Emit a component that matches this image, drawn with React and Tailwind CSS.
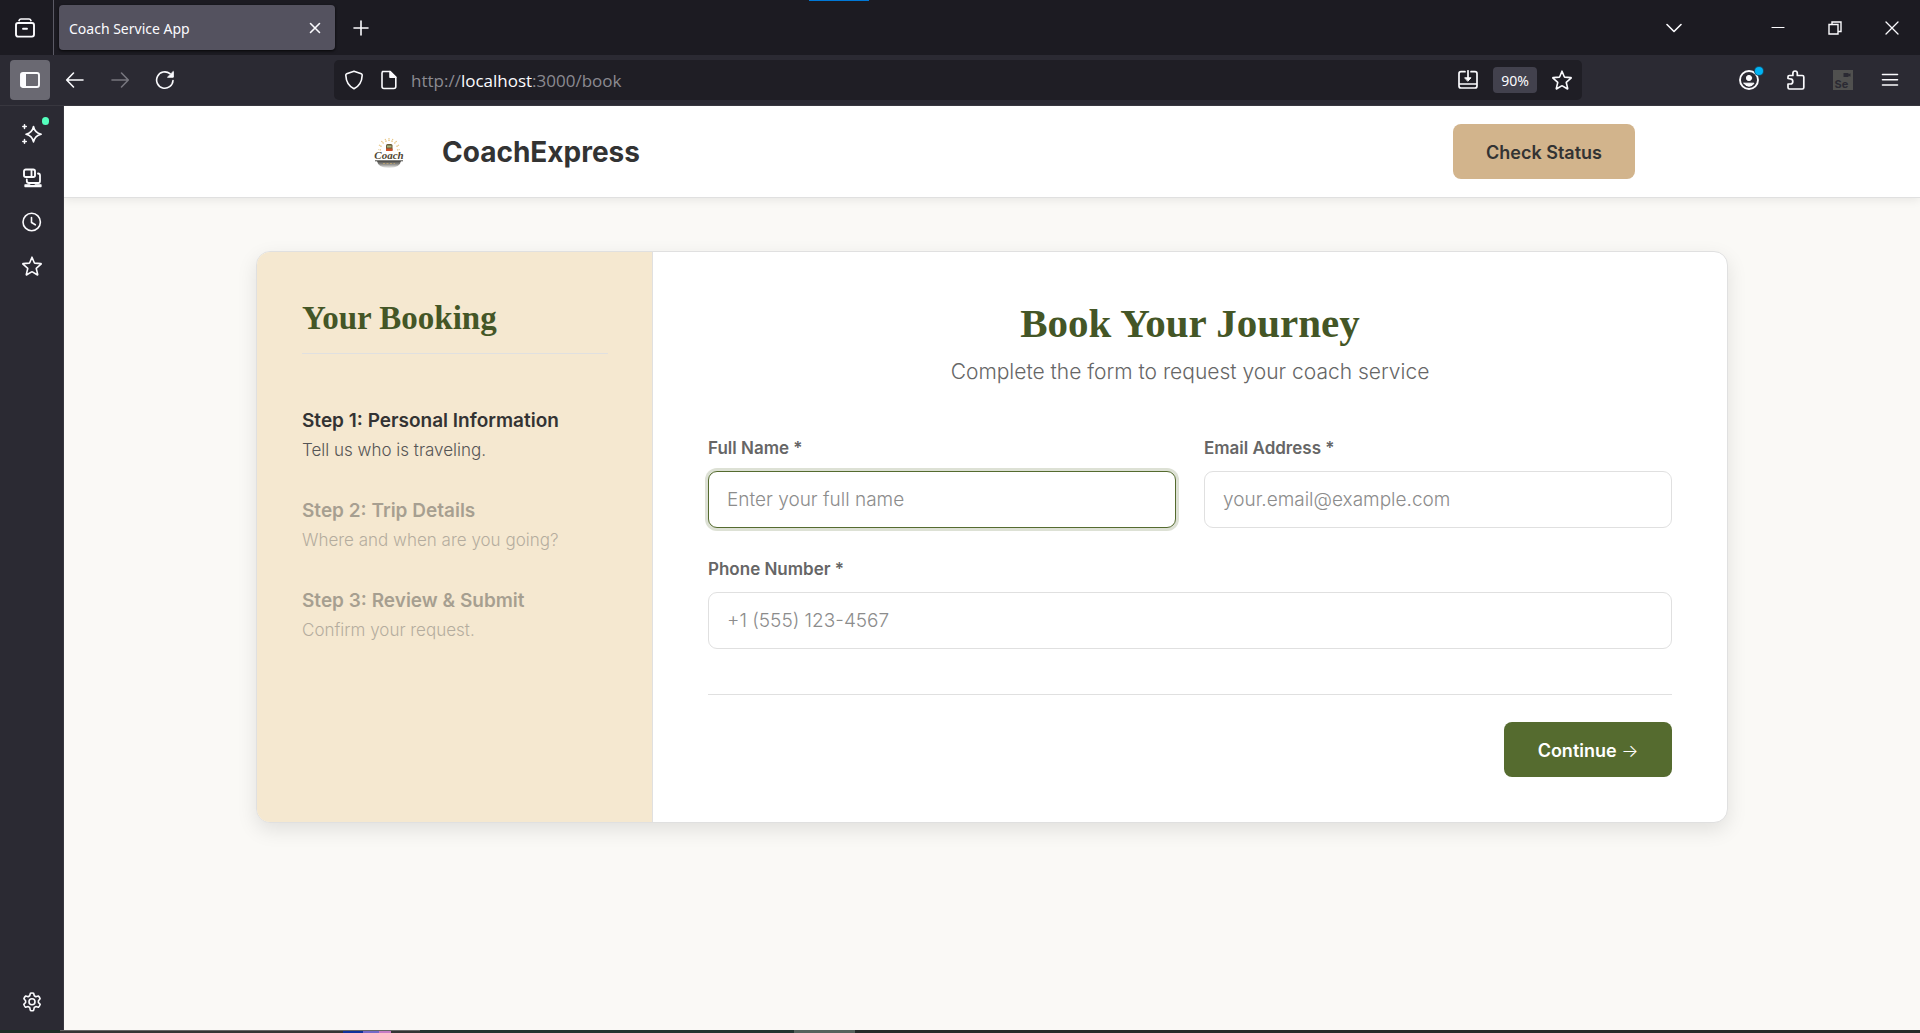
import React from "react";

const UI_FONT = "font-['Noto_Sans','Open_Sans',sans-serif]";
const BODY_FONT = "font-['Inter',sans-serif]";
const TITLE_FONT = "font-['Liberation_Serif',serif]";

function Icon({ size = 20, className = "", children }) {
  return (
    <svg
      width={size}
      height={size}
      viewBox={`0 0 ${size} ${size}`}
      fill="none"
      stroke="currentColor"
      strokeWidth="1.6"
      strokeLinecap="round"
      strokeLinejoin="round"
      className={`shrink-0 ${className}`}
      aria-hidden="true"
    >
      {children}
    </svg>
  );
}

const StarIcon = () => (
  <Icon>
    <path d="M10 1.2l2.3 5.5q.2.4.6.4l5.9.5q.6.2.2.6l-4.5 3.9q-.3.3-.2.7l1.4 5.6q0 .7-.6.4l-4.7-2.9q-.4-.2-.8 0l-4.8 2.9q-.6.3-.5-.4l1.4-5.6q.1-.4-.2-.7L1 8.2q-.4-.4.2-.6l5.9-.5q.4 0 .6-.4z" />
  </Icon>
);

function IconButton({ label, className = "", children }) {
  return (
    <button
      type="button"
      aria-label={label}
      className={`flex size-10 shrink-0 items-center justify-center rounded ${className}`}
    >
      {children}
    </button>
  );
}

function TabBar() {
  return (
    <div className="relative flex h-[55px] shrink-0 items-center bg-[#1c1b22]">
      <div className="absolute left-[809px] top-0 h-px w-[60px] bg-[#0078d7]" />
      <div className="flex h-full w-[54px] shrink-0 items-center border-r border-[#5b5a65] pl-[5px]">
        <IconButton label="Recent browsing">
          <Icon>
            <path d="M4 2.6Q4.6 1 6 1h8q1.400 0 2 1.600" />
            <rect x="1" y="5" width="18" height="13.600" rx="2" strokeWidth="1.900" />
            <path d="M8 10.800h4" strokeWidth="1.900" />
          </Icon>
        </IconButton>
      </div>
      <div className="ml-[5px] flex h-[45px] w-[276px] shrink-0 items-center justify-between rounded bg-[#54525f] pl-[10px] shadow-[0_1px_3px_rgba(0,0,0,0.8)]">
        <span className="pt-0.5 text-sm">Coach Service App</span>
        <button type="button" aria-label="Close tab" className="flex size-10 items-center justify-center">
          <Icon size={12}>
            <path d="M1.500 1.500l9 9M10.500 1.500l-9 9" />
          </Icon>
        </button>
      </div>
      <IconButton label="New tab" className="ml-[6px]">
        <Icon size={16}>
          <path d="M8 1v14M1 8h14" />
        </Icon>
      </IconButton>
      <div className="ml-auto flex items-center">
        <IconButton label="List all tabs" className="mr-16">
          <Icon size={16}>
            <path d="M1 4.500l7 7 7-7" />
          </Icon>
        </IconButton>
        <div className="flex items-center gap-[17px] pr-[8px]">
          <IconButton label="Minimize">
            <Icon size={14}>
              <path d="M1 6.500h12" strokeWidth="1.200" />
            </Icon>
          </IconButton>
          <IconButton label="Restore">
            <Icon size={14}>
              <path d="M1 3.500h9v9.500H1zM4 3.500V1h9v9.500h-3" strokeWidth="1.400" strokeLinejoin="miter" />
            </Icon>
          </IconButton>
          <IconButton label="Close window">
            <Icon size={14}>
              <path d="M1 1l12 12M13 1L1 13" strokeWidth="1.300" />
            </Icon>
          </IconButton>
        </div>
      </div>
    </div>
  );
}

function Toolbar() {
  return (
    <div className="flex h-[51px] shrink-0 items-center border-b border-[#38373f] bg-[#2b2a33] pl-[10px]">
      <IconButton label="Sidebar" className="bg-[#6a6972]">
        <Icon>
          <rect x="1" y="3" width="18" height="14" rx="2" strokeWidth="1.900" />
          <path d="M1.500 3.500h4v13h-4z" fill="currentColor" strokeWidth="1" />
        </Icon>
      </IconButton>
      <div className="ml-[5px] flex gap-[5px]">
        <IconButton label="Back">
          <Icon>
            <path d="M18 10H2M8.500 3L1.700 10l6.800 7" />
          </Icon>
        </IconButton>
        <IconButton label="Forward" className="text-[#77767e]">
          <Icon>
            <path d="M2 10h16M11.500 3l6.800 7-6.800 7" />
          </Icon>
        </IconButton>
        <IconButton label="Reload">
          <Icon>
            <path d="M18 10.500A8.200 8.200 0 1 1 15 3.700" />
            <path d="M18.300 1.800v5.400h-5.400z" fill="currentColor" strokeWidth="1" />
          </Icon>
        </IconButton>
      </div>
      <div className="ml-[149px] flex h-10 min-w-0 max-w-[1248px] flex-1 items-center rounded-[5px] bg-[#1f1e25] pl-[10px] pr-[10px]">
        <Icon>
          <path d="M10 1.200l7.300 2.600q1 .4.900 1.500Q17.800 15 10 18.800 2.200 15 1.800 5.300 1.700 4.200 2.700 3.800z" />
        </Icon>
        <Icon className="ml-[15px]">
          <path d="M3.500 1.500h7.500l5.800 5.800v9.200q0 2-2 2H5q-2 0-2-2V3q0-1.500 1.500-1.500z" />
          <path d="M11 1.500v5.800h5.800z" fill="currentColor" />
        </Icon>
        <div
          role="textbox"
          aria-label="Address"
          contentEditable
          suppressContentEditableWarning
          className="ml-[12px] pt-0.5 font-['Open_Sans',sans-serif] text-[17px] text-[#8b8a91] outline-none"
        >
          http://<span className="text-[#fbfbfe]">localhost</span>:3000/book
        </div>
        <div className="ml-auto flex items-center gap-[15px]">
          <button type="button" aria-label="Install app">
            <Icon>
              <path d="M7 1.700H3q-2 0-2 2V16q0 2 2 2h14q2 0 2-2V3.700q0-2-2-2h-4M1.500 14h17M10 .8V9" strokeWidth="1.700" />
              <path d="M7 7.800h6L10 11z" fill="currentColor" strokeWidth="1" />
            </Icon>
          </button>
          <button type="button" className="h-[26px] w-[44px] rounded bg-[#42414d] pt-px text-sm leading-[26px]">
            90%
          </button>
          <button type="button" aria-label="Bookmark">
            <StarIcon />
          </button>
        </div>
      </div>
      <div className="ml-auto flex shrink-0 items-center gap-[7px] pr-[10px]">
        <IconButton label="Account" className="relative">
          <Icon>
            <circle cx="10" cy="10" r="9" strokeWidth="1.900" />
            <circle cx="10" cy="8" r="2.600" fill="currentColor" strokeWidth="1" />
            <path d="M5 13.200h10q-1.600 3-5 3t-5-3z" fill="currentColor" strokeWidth="1" />
          </Icon>
          <span className="absolute right-[6px] top-[7px] size-2 rounded-full bg-[#00b3f4] shadow-[0_0_0_1px_#14506c]" />
        </IconButton>
        <IconButton label="Extensions">
          <Icon>
            <path d="M2 8.500V6.700q0-1.200 1.200-1.200h3.700V3.200q0-2.200 2.200-2.200t2.200 2.200v2.300h5q1.500 0 1.500 1.500v10.500q0 1.500-1.500 1.500H3.500Q2 19 2 17.500V14h2.500q2.300 0 2.300-2.500T4.500 8.800z" strokeWidth="1.700" />
          </Icon>
        </IconButton>
        <IconButton label="Selenium IDE">
          <svg width="20" height="20" viewBox="0 0 20 20" aria-hidden="true">
            <path fill="#50504f" d="M0 0h20v20H0z" />
            <path fill="#2b2a33" d="M10.500 3h5v1.200l2-1v3.600l-2-1V7h-5z" />
            <text x="1.500" y="17.500" fill="#2b2a33" fontSize="11" fontWeight="700" fontFamily="Inter">
              Se
            </text>
          </svg>
        </IconButton>
        <IconButton label="Menu">
          <Icon>
            <path d="M2.500 4.500h15M2.500 9.800h15M2.500 15h15" />
          </Icon>
        </IconButton>
      </div>
    </div>
  );
}

function SideRail() {
  return (
    <nav className="flex w-16 shrink-0 flex-col items-center gap-1 border-r border-[#38373f] bg-[#2b2a33] pb-2 pt-2">
      <IconButton label="AI chat" className="relative">
        <Icon>
          <path d="M11.500 2.500q1.200 6.300 7.700 7.700-6.500 1.400-7.700 7.700-1.200-6.300-7.500-7.700 6.300-1.400 7.500-7.700z" />
          <path d="M2.500.8v3.600M.8 2.600h3.500M2.500 15.600v3.600M.8 17.400h3.500" strokeWidth="1.500" />
        </Icon>
        <span className="absolute right-[3px] top-[3px] h-2 w-[7px] rounded-full bg-[#54ffbd]" />
      </IconButton>
      <IconButton label="Synced tabs">
        <Icon>
          <rect x="2" y="1.500" width="11" height="7.500" rx="1.800" strokeWidth="1.900" />
          <path d="M9.500 2v6.500M16 5.500q2 .2 2 2V13q0 2-1.500 2H7q-2.200 0-2.200-2v-1.500" strokeWidth="1.800" />
          <path d="M3 16.800h4.500l1 .9h4l1-.9H19v1.700H3z" fill="currentColor" strokeWidth="1.300" />
        </Icon>
      </IconButton>
      <IconButton label="History">
        <Icon>
          <circle cx="9.700" cy="10" r="8.700" />
          <path d="M9.500 5.500v5l3.800 2.300" />
        </Icon>
      </IconButton>
      <IconButton label="Bookmarks">
        <StarIcon />
      </IconButton>
      <IconButton label="Settings" className="mt-auto">
        <Icon>
          <path d="M8.400 1.300q1.600-.6 3.200 0l.7 2.500 1.500.9 2.500-.7q1.400 1.100 1.800 2.800L16.400 8.700v1.800l1.800 1.900q-.5 1.800-1.800 2.900l-2.600-.7-1.500.9-.7 2.900q-1.600.6-3.200 0l-.7-2.900-1.500-.9-2.600.7q-1.300-1.100-1.800-2.900l1.800-1.900V8.700L1.900 6.800Q2.300 5.100 3.700 4l2.500.7 1.500-.9z" />
          <circle cx="10" cy="9.800" r="3" />
        </Icon>
      </IconButton>
    </nav>
  );
}

function CoachLogo() {
  return (
    <svg width="36" height="36" viewBox="0 0 36 36" aria-label="Coach">
      <defs>
        <linearGradient id="road" x1="0" y1="0" x2="0" y2="1">
          <stop offset="0" stopColor="#4a4946" />
          <stop offset="0.45" stopColor="#8b8a86" />
          <stop offset="1" stopColor="#f2f2f1" />
        </linearGradient>
      </defs>
      <path
        d="M10 16L7.500 15.500M10.500 12.500L8 11M12.500 9.500L10.500 7M15.200 7.800L14.200 5M18 7V4.200M20.800 7.800L21.800 5M23.500 9.500L25.500 7M25.500 12.500L28 11M26 16l2.500-.5"
        stroke="#e2b765"
        strokeWidth="1.200"
        strokeDasharray="1.400 .7"
      />
      <rect x="15" y="10" width="6.500" height="7" rx="1.500" fill="#6b5a36" />
      <path d="M16 11.500h4.500v2H16z" fill="#a9b981" />
      <path d="M15 14.500h6.500V17H15z" fill="#cf5127" />
      <path d="M6 27h24q-1 7-12 7T6 27z" fill="url(#road)" />
      <path d="M4 26.800h28" stroke="#4b4a46" strokeWidth="1" />
      <path d="M12 29.500h12" stroke="#d9b36a" strokeWidth=".6" strokeDasharray="2 1.500" />
      <text
        x="18"
        y="24.500"
        textAnchor="middle"
        fontFamily="Liberation Serif"
        fontStyle="italic"
        fontWeight="700"
        fontSize="11"
        fill="#514632"
      >
        Coach
      </text>
    </svg>
  );
}

const steps = [
  { title: "Step 1: Personal Information", text: "Tell us who is traveling.", active: true },
  { title: "Step 2: Trip Details", text: "Where and when are you going?" },
  { title: "Step 3: Review & Submit", text: "Confirm your request." },
];

function Field({ id, label, type = "text", placeholder, focused = false, className = "" }) {
  return (
    <div className={`flex flex-col gap-[13px] ${className}`}>
      <label htmlFor={id} className="text-[17px] font-semibold leading-5 text-[#666666]">
        {label}
      </label>
      <input
        id={id}
        type={type}
        placeholder={placeholder}
        className={`h-[57px] w-full rounded-[9px] border bg-white px-[18px] text-[19px] font-light text-[#333333] outline-none placeholder:text-[#8c8c8c] ${
          focused ? "border-[#556b2f] shadow-[0_0_0_3px_rgba(85,107,47,0.2)]" : "border-[#e0e0e0]"
        }`}
      />
    </div>
  );
}

function BookingPage() {
  return (
    <div className={`flex min-w-0 flex-1 flex-col overflow-hidden bg-[#faf9f6] text-[#333333] ${BODY_FONT}`}>
      <header className="border-b border-[#e0e0e0] bg-white px-6 py-[18px] shadow-[0_2px_9px_rgba(0,0,0,0.08)]">
        <div className="mx-auto flex max-w-[1286px] items-center">
          <div className="flex w-[79px] shrink-0 justify-center">
            <CoachLogo />
          </div>
          <span className="ml-[14px] text-[28px] font-bold leading-[36px]">CoachExpress</span>
          <button
            type="button"
            className="ml-auto h-[55px] w-[182px] rounded-lg bg-[#d2b48c] pt-0.5 text-lg font-semibold"
          >
            Check Status
          </button>
        </div>
      </header>
      <main className="px-6 py-[53px]">
        <div className="mx-auto flex max-w-[1472px] overflow-hidden rounded-[14px] border border-[#e0e0e0] bg-white shadow-[0_7px_20px_rgba(0,0,0,0.1)]">
          <aside className="w-[396px] shrink-0 border-r border-[#e0e0e0] bg-[#f5e8d0] p-[45px] pr-[44px]">
            <h2 className={`border-b border-[#e0e0e0] pb-[14px] text-[33px] font-bold leading-[42px] text-[#445626] ${TITLE_FONT}`}>
              Your Booking
            </h2>
            <ol className="mt-[53px] flex flex-col gap-8">
              {steps.map((s) => (
                <li key={s.title} className={s.active ? "" : "opacity-40"}>
                  <h3 className="text-[19px] font-semibold leading-[28px]">{s.title}</h3>
                  <p className="text-[17px] font-light leading-[30px] text-[#555555]">{s.text}</p>
                </li>
              ))}
            </ol>
          </aside>
          <section className="min-w-0 flex-1 px-[55px] pb-[45px] pt-11">
            <h1 className={`text-center text-[41px] font-bold leading-[54px] text-[#445626] ${TITLE_FONT}`}>
              Book Your Journey
            </h1>
            <p className="mt-2 text-center text-[21px] font-light leading-7 text-[#666666]">
              Complete the form to request your coach service
            </p>
            <form className="mt-[52px]">
              <div className="grid grid-cols-2 gap-x-7 gap-y-[31px]">
                <Field id="name" label="Full Name *" placeholder="Enter your full name" focused />
                <Field id="email" type="email" label="Email Address *" placeholder="your.email@example.com" />
                <Field id="phone" type="tel" label="Phone Number *" placeholder="+1 (555) 123-4567" className="col-span-2" />
              </div>
              <div className="mt-[45px] flex justify-end border-t border-[#e0e0e0] pt-[27px]">
                <button
                  type="button"
                  className="h-[55px] w-[168px] rounded-lg bg-[#556b2f] pt-0.5 text-lg font-semibold text-white"
                >
                  Continue <span className="font-light">→</span>
                </button>
              </div>
            </form>
          </section>
        </div>
      </main>
    </div>
  );
}

function TaskbarEdge() {
  return (
    <div className="flex h-[3px] shrink-0 bg-[#20302a]">
      <div className="w-[60px] bg-[#1d2f26]" />
      <div className="flex w-[360px] border-t border-[#666666] bg-[#333333] pl-[283px]">
        <div className="w-[20px] bg-[#10309a]" />
        <div className="w-[16px] bg-[#7468c8]" />
        <div className="w-[12px] bg-[#c77ac4]" />
      </div>
      <div className="w-[374px] bg-[#23342f]" />
      <div className="w-[61px] bg-[#56625c]" />
      <div className="flex-1 bg-[#242a28]" />
    </div>
  );
}

export default function App() {
  return (
    <div className={`flex h-screen flex-col overflow-hidden text-[#fbfbfe] ${UI_FONT}`}>
      <TabBar />
      <Toolbar />
      <div className="flex min-h-0 flex-1">
        <SideRail />
        <BookingPage />
      </div>
      <TaskbarEdge />
    </div>
  );
}
